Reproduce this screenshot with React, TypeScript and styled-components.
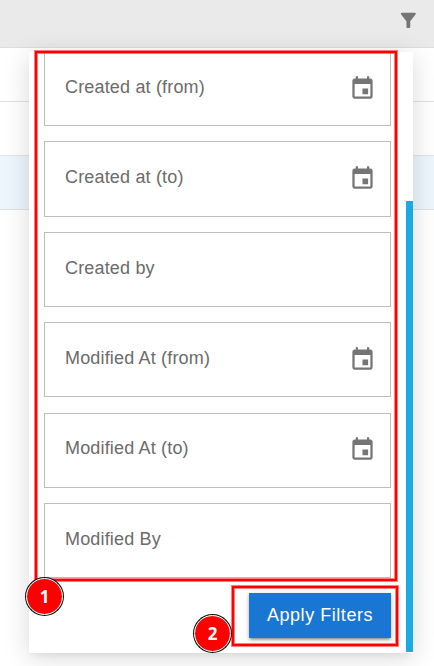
import React from "react";
import styled, { createGlobalStyle } from "styled-components";

const GlobalStyle = createGlobalStyle`
  * { box-sizing: border-box; }
  body {
    margin: 0;
    overflow: hidden;
    background: #fff;
    font-family: "Liberation Sans", Arial, sans-serif;
  }
`;

const Screen = styled.main`
  position: relative;
  width: 434px;
  height: 666px;
  overflow: hidden;
  background: #fff;
`;

const TableHeader = styled.header`
  display: flex;
  justify-content: flex-end;
  height: 48px;
  padding: 9px 14.5px 0 0;
  background: #eaeaea;
  border-bottom: 1px solid #dedede;
`;

const TableRow = styled.div<{ $selected?: boolean }>`
  height: 54px;
  background: ${(p) => (p.$selected ? "#edf5fd" : "#fff")};
  border-bottom: 1px solid #e2e2e2;
`;

const Icon = styled.svg<{ $size: number }>`
  display: block;
  flex: none;
  width: ${(p) => p.$size}px;
  height: ${(p) => p.$size}px;
  fill: #757575;
`;

const DateIcon = styled(Icon)`
  margin-top: -1px;
`;

const FilterMenu = styled.section`
  position: absolute;
  left: 29px;
  top: 52px;
  display: flex;
  width: 384px;
  height: 601px;
  background: #fff;
  box-shadow: 0 6px 6px -3px rgba(0, 0, 0, 0.05), 0 4px 24px 1px rgba(0, 0, 0, 0.14);
`;

const MenuContent = styled.div`
  flex: 1;
  display: flex;
  flex-direction: column;
  overflow: hidden;
  padding: 0 15px;
`;

const FieldList = styled.div`
  display: flex;
  flex-direction: column;
  gap: 15.2px;
  margin-top: -0.95px;
`;

const Field = styled.label`
  flex: none;
  display: flex;
  align-items: center;
  justify-content: space-between;
  height: 75.2px;
  padding: 0 14px 0 20px;
  border: 1px solid #bdbdbd;
`;

const FieldLabel = styled.span`
  color: #6b6b6b;
  font-size: 18px;
  line-height: 24px;
  letter-spacing: 0.17px;
  margin-top: -3.5px;
`;

const Actions = styled.div`
  display: flex;
  justify-content: flex-end;
  margin-top: 15px;
`;

const ApplyButton = styled.button`
  width: 142px;
  height: 45px;
  padding: 0;
  border: 0;
  background: #1976d2;
  color: #fff;
  font: 18px/45px "Liberation Sans", Arial, sans-serif;
  letter-spacing: 0.54px;
  box-shadow: 0 3px 2px -2px rgba(0, 0, 0, 0.25), 0 2px 3px rgba(0, 0, 0, 0.2),
    0 1px 6px rgba(0, 0, 0, 0.16);
`;

const ScrollTrack = styled.div`
  width: 7px;
  padding-top: 149.4px;
`;

const ScrollThumb = styled.div`
  height: 451px;
  background: #1daae3;
`;

const Highlight = styled.div<{ $x: number; $y: number; $w: number; $h: number }>`
  position: absolute;
  left: ${(p) => p.$x}px;
  top: ${(p) => p.$y}px;
  width: ${(p) => p.$w}px;
  height: ${(p) => p.$h}px;
  border: 2px solid #f00;
  box-shadow: 0 0 0 1px rgba(255, 0, 0, 0.5), inset 0 0 0 1px rgba(255, 0, 0, 0.5);
  pointer-events: none;
`;

const Step = styled.div<{ $x: number; $y: number }>`
  position: absolute;
  left: ${(p) => p.$x}px;
  top: ${(p) => p.$y}px;
  display: flex;
  align-items: center;
  justify-content: center;
  width: 37px;
  height: 37px;
  padding-top: 1px;
  border-radius: 50%;
  border: 1px solid #fff;
  background: #f00;
  background-clip: padding-box;
  box-shadow: 0 0 0 1px #111;
  color: #fff;
  font: 700 17px/20px "Open Sans", "Noto Sans", sans-serif;
`;

const EventIcon = () => (
  <DateIcon $size={27} viewBox="0 0 24 24" aria-hidden="true">
    <path d="M17 12h-5v5h5v-5zM16 1v2H8V1H6v2H5c-1.11 0-1.99.9-1.99 2L3 19c0 1.1.89 2 2 2h14c1.1 0 2-.9 2-2V5c0-1.1-.9-2-2-2h-1V1h-2zm3 18H5V8h14v11z" />
  </DateIcon>
);

const FunnelIcon = () => (
  <Icon $size={22.7} viewBox="0 0 24 24" aria-hidden="true">
    <path d="M4.25 5.61C6.27 8.2 10 13 10 13v6c0 .55.45 1 1 1h2c.55 0 1-.45 1-1v-6s3.72-4.8 5.74-7.39A.998.998 0 0 0 18.95 4H5.04c-.83 0-1.3.95-.79 1.61z" />
  </Icon>
);

const fields = [
  { label: "Created at (from)", date: true },
  { label: "Created at (to)", date: true },
  { label: "Created by", date: false },
  { label: "Modified At (from)", date: true },
  { label: "Modified At (to)", date: true },
  { label: "Modified By", date: false },
];

export default function App() {
  return (
    <Screen>
      <GlobalStyle />
      <TableHeader>
        <FunnelIcon />
      </TableHeader>
      <TableRow />
      <TableRow />
      <TableRow $selected />
      <FilterMenu>
        <MenuContent>
          <FieldList>
            {fields.map((f) => (
              <Field key={f.label}>
                <FieldLabel>{f.label}</FieldLabel>
                {f.date && <EventIcon />}
              </Field>
            ))}
          </FieldList>
          <Actions>
            <ApplyButton type="button">Apply Filters</ApplyButton>
          </Actions>
        </MenuContent>
        <ScrollTrack>
          <ScrollThumb />
        </ScrollTrack>
      </FilterMenu>
      <Highlight $x={35} $y={51} $w={362} $h={530} />
      <Highlight $x={232} $y={586} $w={166} $h={60} />
      <Step $x={26} $y={578}>1</Step>
      <Step $x={194} $y={615}>2</Step>
    </Screen>
  );
}
